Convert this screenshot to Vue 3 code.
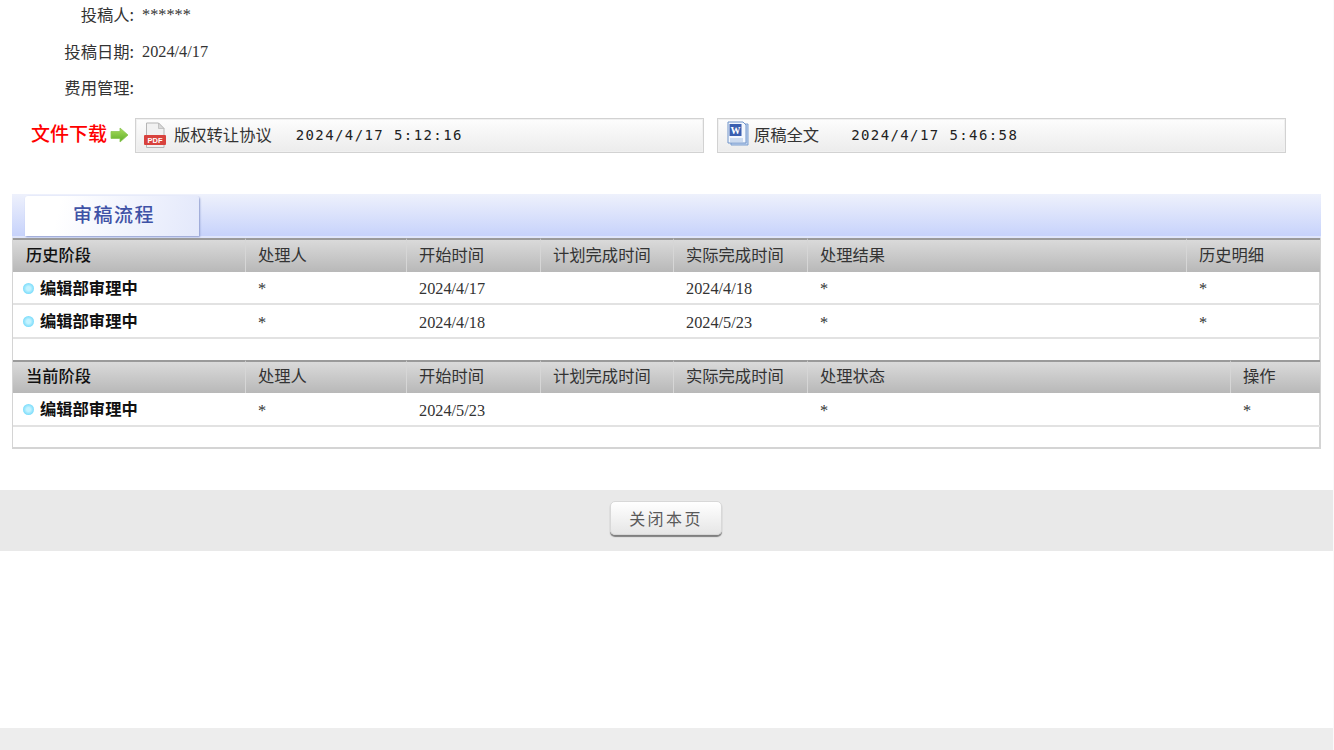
<script setup>
const meta = [
  { label: '投稿人:', value: '******' },
  { label: '投稿日期:', value: '2024/4/17' },
  { label: '费用管理:', value: '' },
]
const sections = [
  {
    cols: [232, 161, 134, 133, 134, 379, 134],
    headHeight: 34,
    rowHeights: [33, 34],
    gap: 21,
    head: ['历史阶段', '处理人', '开始时间', '计划完成时间', '实际完成时间', '处理结果', '历史明细'],
    rows: [
      ['编辑部审理中', '*', '2024/4/17', '', '2024/4/18', '*', '*'],
      ['编辑部审理中', '*', '2024/4/18', '', '2024/5/23', '*', '*'],
    ],
  },
  {
    cols: [232, 161, 134, 133, 134, 423, 90],
    headHeight: 33,
    rowHeights: [34],
    gap: 20,
    head: ['当前阶段', '处理人', '开始时间', '计划完成时间', '实际完成时间', '处理状态', '操作'],
    rows: [['编辑部审理中', '*', '2024/5/23', '', '', '*', '*']],
  },
]
</script>

<template>
  <div class="page">
    <div class="meta">
      <div v-for="m in meta" :key="m.label" class="meta-row">
        <span class="meta-label">{{ m.label }}</span>
        <span class="meta-value">{{ m.value }}</span>
      </div>
    </div>

    <div class="files">
      <div class="files-label">
        <span class="files-text">文件下载</span>
        <svg class="arrow" width="19" height="16" viewBox="0 0 19 16">
          <defs>
            <linearGradient id="ag" x1="0" y1="0" x2="0" y2="1">
              <stop offset="0" stop-color="#a9dd5c" />
              <stop offset="1" stop-color="#5fae2a" />
            </linearGradient>
          </defs>
          <path d="M1 4.500h9V1L18 8l-8 7v-3.500H1z" fill="url(#ag)" stroke="#8cc653" stroke-width=".8" />
        </svg>
      </div>
      <div class="file-box">
        <svg class="pdf" width="24" height="27" viewBox="0 0 24 27">
          <path d="M3.500 1h12L21 6.500V25.500H3.500z" fill="#f1f1f1" stroke="#b5b5b5" />
          <path d="M15.500 1v5.500H21z" fill="#d8d8d8" stroke="#b5b5b5" stroke-width=".7" />
          <rect x="1" y="13" width="22" height="10" rx="1" fill="#d8423d" />
          <text x="12" y="21" class="pdf-text" text-anchor="middle">PDF</text>
        </svg>
        <span class="file-name">版权转让协议</span>
        <span class="file-time">2024/4/17 5:12:16</span>
      </div>
      <div class="file-box">
        <svg class="word" width="24" height="25" viewBox="0 0 24 25">
          <path d="M5 3h17v21H5z" fill="#c3d5ef" stroke="#7c9fd0" />
          <path d="M2 1h15l3 3v18H2z" fill="#f3f7fd" stroke="#6f93c9" />
          <rect x="3.500" y="3" width="12" height="12" fill="#3a5fb0" />
          <text x="9.500" y="13" class="word-text" text-anchor="middle">W</text>
          <path d="M4 18h13M4 20h13" stroke="#a6bfe2" />
        </svg>
        <span class="file-name">原稿全文</span>
        <span class="file-time wide">2024/4/17 5:46:58</span>
      </div>
    </div>

    <section class="panel">
      <div class="panel-bar">
        <div class="panel-tab">审稿流程</div>
      </div>
      <div class="panel-body">
        <div v-for="s in sections" :key="s.head[0]" :style="{ paddingBottom: s.gap + 'px' }">
          <table class="grid">
            <colgroup>
              <col v-for="(w, i) in s.cols" :key="i" :style="{ width: w + 'px' }" />
            </colgroup>
            <thead>
              <tr :style="{ height: s.headHeight + 'px' }">
                <th v-for="(h, i) in s.head" :key="i" :class="{ first: i === 0 }">{{ h }}</th>
              </tr>
            </thead>
            <tbody>
              <tr v-for="(r, ri) in s.rows" :key="ri" :style="{ height: s.rowHeights[ri] + 'px' }">
                <td v-for="(c, ci) in r" :key="ci" :class="{ stage: ci === 0 }">
                  <template v-if="ci === 0">
                    <i class="dot"></i>{{ c }}
                  </template>
                  <template v-else>{{ c }}</template>
                </td>
              </tr>
            </tbody>
          </table>
        </div>
      </div>
    </section>

    <div class="actions">
      <button class="close-btn" type="button">关闭本页</button>
    </div>
    <div class="page-foot"></div>
  </div>
</template>

<style>
html, body { margin: 0; background: #fafafa; }
</style>

<style scoped>
.page {
  width: 1333px;
  height: 750px;
  display: flex;
  flex-direction: column;
  overflow: hidden;
  font-family: "Liberation Serif", "Noto Sans CJK SC", serif;
  font-size: 16.3px;
  color: #333;
  background: #fff;
}
.meta { height: 107px; }
.meta-row { display: flex; height: 36.500px; line-height: 30px; }
.meta-label {
  width: 134px;
  text-align: right;
  font-family: "Noto Sans CJK SC", sans-serif;
  line-height: 28px;
}
.meta-value { margin-left: 8px; }

.files {
  display: flex;
  align-items: stretch;
  height: 35px;
  margin-top: 11px;
  gap: 13px;
  padding-left: 31px;
}
.files-label {
  width: 91px;
  display: flex;
  align-items: center;
  gap: 3px;
  color: #f00;
  font: 500 19px/1 "Noto Sans CJK SC", sans-serif;
  white-space: nowrap;
}
.files-text { margin-top: -7px; }
.arrow { margin-top: -2px; flex: none; }
.file-box {
  box-sizing: border-box;
  width: 569px;
  display: flex;
  align-items: center;
  border: 1px solid #d2d2d2;
  box-shadow: inset 0 0 0 1px #f0f0f0;
  background: linear-gradient(#fdfdfd, #ececec);
  font-family: "Noto Sans CJK SC", sans-serif;
  padding-left: 7px;
}
.pdf { margin-right: 7px; flex: none; }
.word { margin: -5px 4px 0 1px; flex: none; }
.pdf-text { font: bold 7.500px "Liberation Sans", sans-serif; fill: #fff; }
.word-text { font: bold 10px "Liberation Serif", serif; fill: #fff; }
.file-name { color: #333; line-height: 1; margin-top: -3px; }
.file-time {
  margin: -2px 0 0 24px;
  font: 14px "DejaVu Sans Mono", monospace;
  letter-spacing: 1.400px;
  color: #222;
}
.file-time.wide { margin-left: 32px; }

.panel {
  box-sizing: border-box;
  width: 1309px;
  margin: 41px 0 0 12px;
}
.panel-bar {
  height: 44px;
  box-sizing: border-box;
  padding: 2px 0 0 13px;
  background: linear-gradient(#eef1fc, #c5d1fb);
  box-shadow: inset 0 -2px 0 #dfe5fb;
}
.panel-tab {
  box-sizing: border-box;
  width: 174px;
  height: 40px;
  padding-left: 48px;
  border-radius: 3px 3px 0 0;
  background: linear-gradient(105deg, #fff 20%, #e3e8fb);
  box-shadow: 1px 1px 2px #8f9dcf;
  color: #3f52a6;
  font: 500 19px/36px "Noto Sans CJK SC", sans-serif;
  letter-spacing: 1.500px;
}
.panel-body {
  border: 2px solid #d4d4d4;
  border-top: 0;
  border-left-width: 1px;
}
.grid {
  width: 100%;
  table-layout: fixed;
  border-collapse: separate;
  border-spacing: 0;
}
.grid th {
  box-sizing: border-box;
  padding: 0 0 3px 12px;
  text-align: left;
  font: 400 16.3px/1.2 "Noto Sans CJK SC", sans-serif;
  color: #333;
  border-top: 2px solid #9a9a9a;
  border-left: 1px solid #d6d6d6;
  background: linear-gradient(#dadada, #b8b8b8);
}
.grid th:first-child { border-left: 0; padding-left: 13px; }
.grid th.first { color: #111; font-weight: 500; }
.grid td {
  box-sizing: border-box;
  padding: 3px 0 0 13px;
  border-bottom: 2px solid #e2e2e2;
  color: #333;
}
.grid td.stage {
  padding: 1px 0 1px 10px;
  font: 700 16.3px/1.2 "Noto Sans CJK SC", sans-serif;
  color: #111;
}
.dot {
  display: inline-block;
  width: 11px;
  height: 11px;
  margin-right: 6px;
  border-radius: 50%;
  vertical-align: 0;
  background: radial-gradient(circle at 50% 50%, #c4f3ff 0 25%, #7adcfb 70%, #8fd8f8 100%);
}

.actions {
  height: 61px;
  margin-top: 41px;
  background: #e9e9e9;
  display: flex;
  justify-content: center;
  padding: 11px 1px 0 0;
  box-sizing: border-box;
}
.close-btn {
  width: 112px;
  height: 34px;
  padding: 0;
  border: 1px solid #d8d8d8;
  border-radius: 5px;
  background: linear-gradient(#ffffff, #e6e6e6);
  box-shadow: 0 2px 1px #7f7f7f;
  font: 16px "Noto Sans CJK SC", sans-serif;
  letter-spacing: 2.400px;
  color: #5a5a5a;
}
.page-foot {
  height: 22px;
  margin-top: auto;
  background: #ededed;
}
</style>
